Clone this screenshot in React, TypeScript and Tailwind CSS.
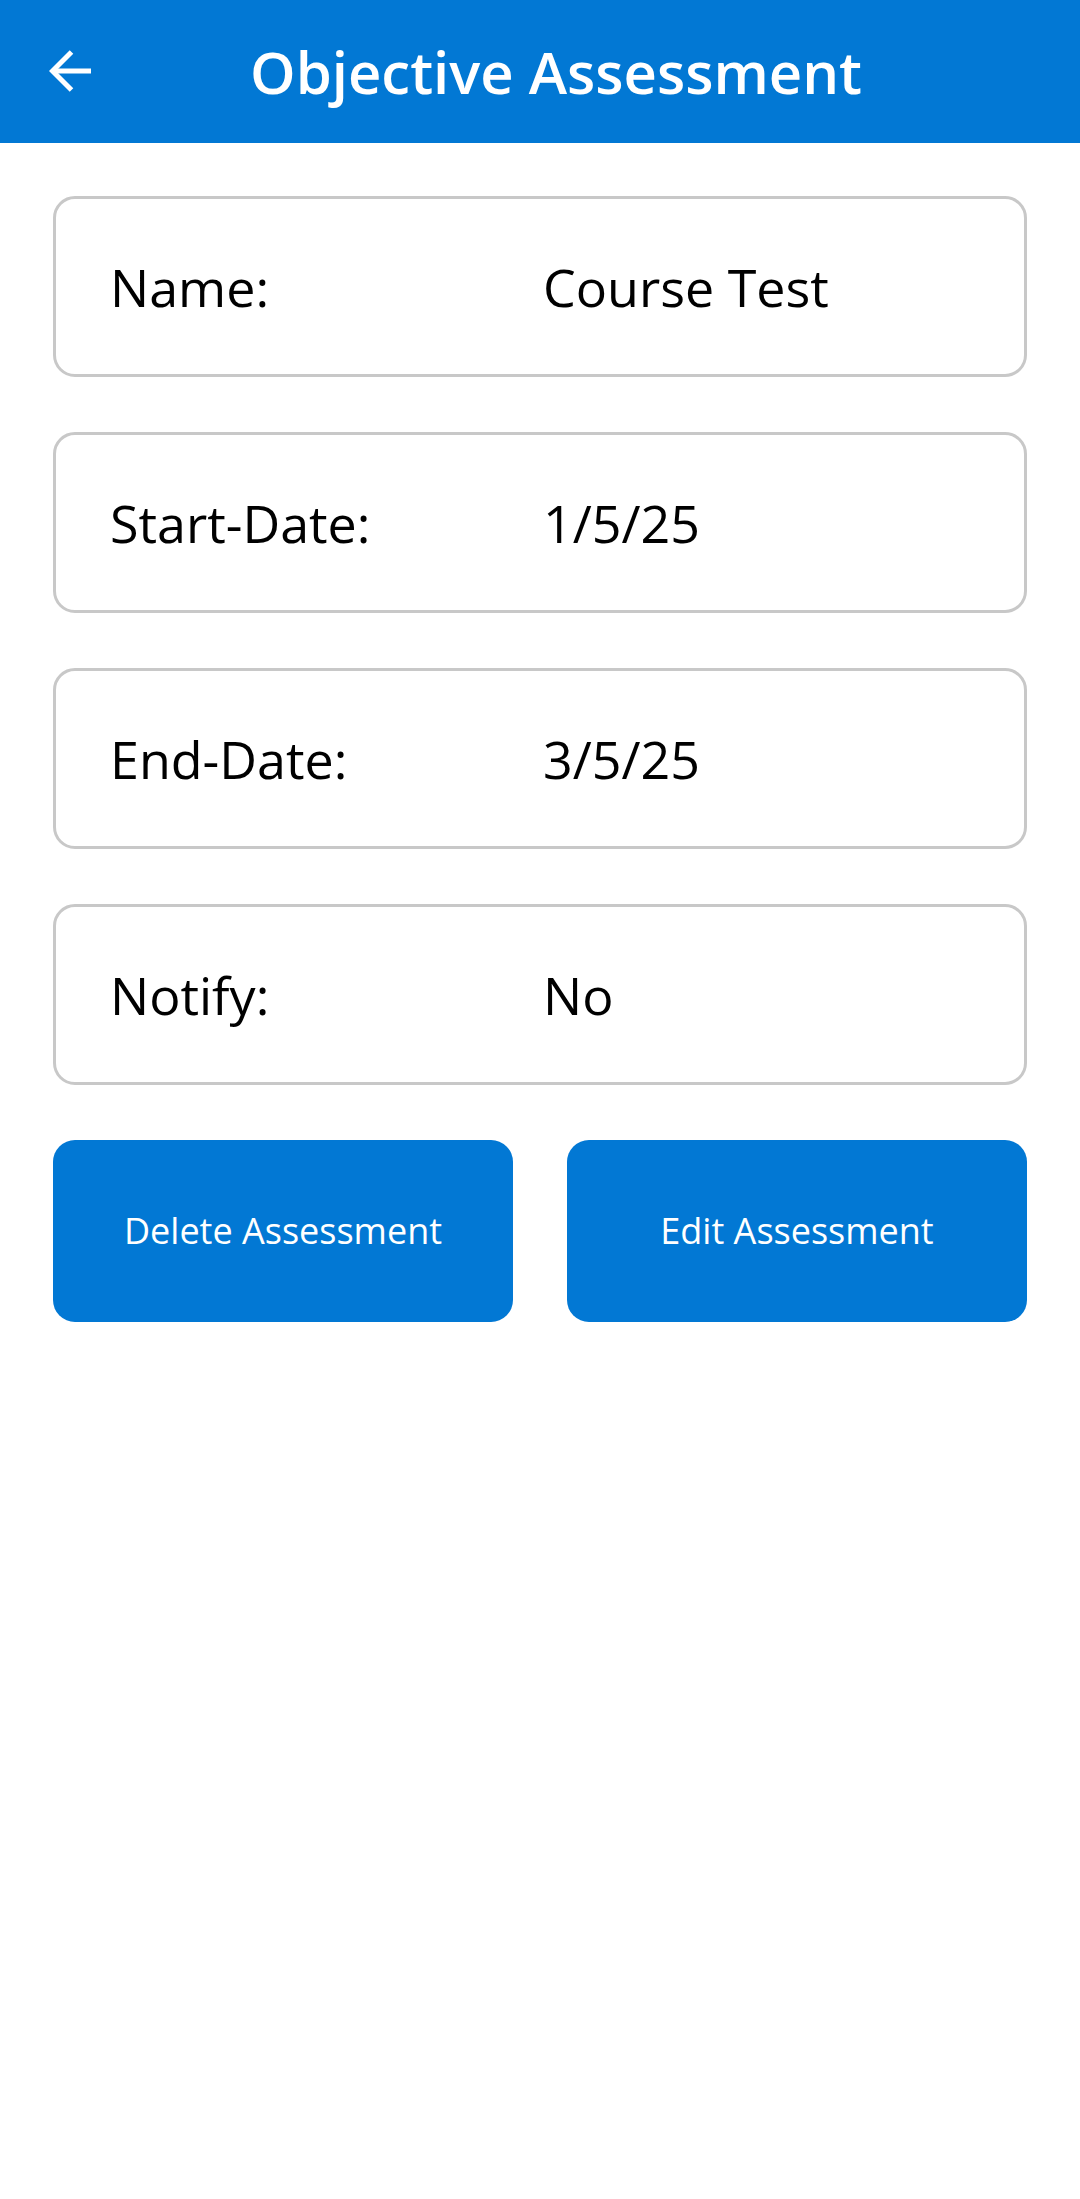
import React from "react";

const rows = [
  { label: "Name:", value: "Course Test" },
  { label: "Start-Date:", value: "1/5/25" },
  { label: "End-Date:", value: "3/5/25" },
  { label: "Notify:", value: "No" },
];

const BackArrow: React.FC = () => (
  <svg width="44" height="44" viewBox="0 0 44 44" fill="none" stroke="white" strokeWidth="5">
    <path d="M22.5 2 L3.5 21 L22.5 40" strokeLinejoin="miter" />
    <path d="M4 21 H42" />
  </svg>
);

const App: React.FC = () => {
  return (
    <div className="min-h-screen w-[1080px] bg-white font-['Open_Sans',sans-serif] text-black">
      <header className="flex h-[143px] items-center bg-[#0278d4]">
        <div className="flex w-[140px] pl-[49px]">
          <BackArrow />
        </div>
        <h1 className="flex-1 pr-[108px] text-center text-[58px] font-semibold leading-none text-white">
          Objective Assessment
        </h1>
      </header>

      <main className="flex flex-col gap-[55px] px-[53px] pt-[53px]">
        {rows.map((row) => (
          <div
            key={row.label}
            className="flex h-[181px] items-center rounded-[22px] border-[3px] border-[#c8c8c8] pl-[54px]"
          >
            <span className="w-[433px] text-[52px] leading-none">{row.label}</span>
            <span className="text-[52px] leading-none">{row.value}</span>
          </div>
        ))}

        <div className="grid grid-cols-2 gap-[54px]">
          <button className="h-[182px] rounded-[22px] bg-[#0278d4] text-[36px] text-white">
            Delete Assessment
          </button>
          <button className="h-[182px] rounded-[22px] bg-[#0278d4] text-[36px] text-white">
            Edit Assessment
          </button>
        </div>
      </main>
    </div>
  );
};

export default App;
